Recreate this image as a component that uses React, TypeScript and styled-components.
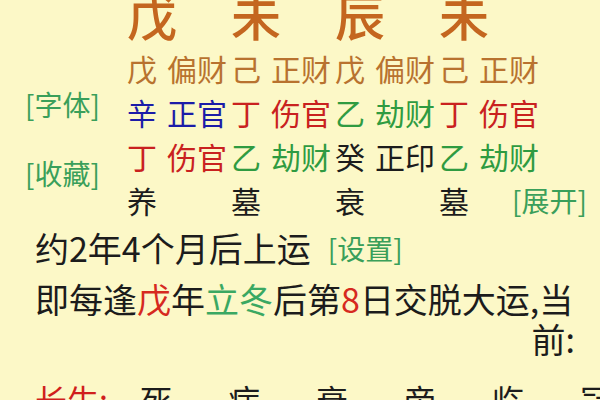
import React, { ReactElement } from 'react'
import styled, { createGlobalStyle } from 'styled-components'

const GlobalStyle = createGlobalStyle`
  html, body {
    margin: 0;
    padding: 0;
    overflow: hidden;
    background: #fcf8c7;
  }
`

const Page = styled.div`
  width: 600px;
  height: 400px;
  overflow: hidden;
  background: #fcf8c7;
  font-family: 'Noto Sans CJK SC', 'Noto Sans', sans-serif;
  color: #1c1c1c;
`

const Chart = styled.div`
  display: flex;
  flex-direction: row;
`

const SideColumn = styled.div`
  width: 127px;
  box-sizing: border-box;
  padding: 86px 0 0 25px;
  display: flex;
  flex-direction: column;
  gap: 33px;
`

const Link = styled.span`
  font-size: 28px;
  line-height: 36px;
  color: #3a9f5a;
  white-space: nowrap;
`

const Pillars = styled.div`
  display: flex;
  flex-direction: column;
`

const Row = styled.div`
  display: grid;
  grid-template-columns: repeat(4, 104px);
  font-size: 30px;
  line-height: 44px;
  white-space: nowrap;
`

const BigRow = styled(Row)`
  font-size: 50px;
  font-weight: 500;
  line-height: 28px;
  margin-bottom: 18px;
`

const Cell = styled.div`
  display: flex;
  flex-direction: row;
`

const Word = styled.span<{ $color: string; $gap?: boolean }>`
  color: ${p => p.$color};
  margin-left: ${p => (p.$gap ? 10 : 0)}px;
`

const Expand = styled(Link)`
  line-height: 44px;
  margin-left: 43px;
`

const Notes = styled.div`
  padding: 6px 25px 0 35px;
  font-size: 34px;
  line-height: 40px;
  white-space: nowrap;
`

const Line = styled.div`
  display: flex;
  flex-direction: row;
  align-items: center;
  gap: 17px;
`

const Rule = styled.div`
  margin-top: 11px;
`

const RuleTail = styled.div`
  text-align: right;
`

const Mark = styled.span<{ $color: string }>`
  color: ${p => p.$color};
`

const Stages = styled.div`
  margin-top: 20px;
  display: grid;
  grid-template-columns: 105px repeat(6, 88px);
  font-size: 32px;
  line-height: 40px;
`

const StageLabel = styled.span`
  color: #d01f1c;
`

const BROWN = '#c4661f'
const TAN = '#b8722f'
const BLUE = '#1c1ca8'
const RED = '#c9211f'
const GREEN = '#2f9b41'
const BLACK = '#1c1c1c'

type Pair = { stem: string; name: string; color: string }

const stems = ['戊', '未', '辰', '未']

const rows: Pair[][] = [
  [
    { stem: '戊', name: '偏财', color: TAN },
    { stem: '己', name: '正财', color: TAN },
    { stem: '戊', name: '偏财', color: TAN },
    { stem: '己', name: '正财', color: TAN },
  ],
  [
    { stem: '辛', name: '正官', color: BLUE },
    { stem: '丁', name: '伤官', color: RED },
    { stem: '乙', name: '劫财', color: GREEN },
    { stem: '丁', name: '伤官', color: RED },
  ],
  [
    { stem: '丁', name: '伤官', color: RED },
    { stem: '乙', name: '劫财', color: GREEN },
    { stem: '癸', name: '正印', color: BLACK },
    { stem: '乙', name: '劫财', color: GREEN },
  ],
]

const phases = ['养', '墓', '衰', '墓']
const stages = ['死', '病', '衰', '帝', '临', '冠']

const App = (): ReactElement => (
  <Page>
    <GlobalStyle />
    <Chart>
      <SideColumn>
        <Link>[字体]</Link>
        <Link>[收藏]</Link>
      </SideColumn>

      <Pillars>
        <BigRow>
          {stems.map((s, i) => (
            <Cell key={i}>
              <Word $color={BROWN}>{s}</Word>
            </Cell>
          ))}
        </BigRow>

        {rows.map((row, r) => (
          <Row key={r}>
            {row.map((p, i) => (
              <Cell key={i}>
                <Word $color={p.color}>{p.stem}</Word>
                <Word $color={p.color} $gap>
                  {p.name}
                </Word>
              </Cell>
            ))}
          </Row>
        ))}

        <Row>
          {phases.map((p, i) => (
            <Cell key={i}>
              <Word $color={BLACK}>{p}</Word>
              {i === phases.length - 1 && <Expand>[展开]</Expand>}
            </Cell>
          ))}
        </Row>
      </Pillars>
    </Chart>

    <Notes>
      <Line>
        <span>约2年4个月后上运</span>
        <Link>[设置]</Link>
      </Line>
      <Rule>
        即每逢<Mark $color='#d62a1f'>戊</Mark>年<Mark $color='#3aa862'>立冬</Mark>后第
        <Mark $color='#d62a1f'>8</Mark>日交脱大运,当
      </Rule>
      <RuleTail>前:</RuleTail>
      <Stages>
        <StageLabel>长生:</StageLabel>
        {stages.map(s => (
          <span key={s}>{s}</span>
        ))}
      </Stages>
    </Notes>
  </Page>
)

export default App
